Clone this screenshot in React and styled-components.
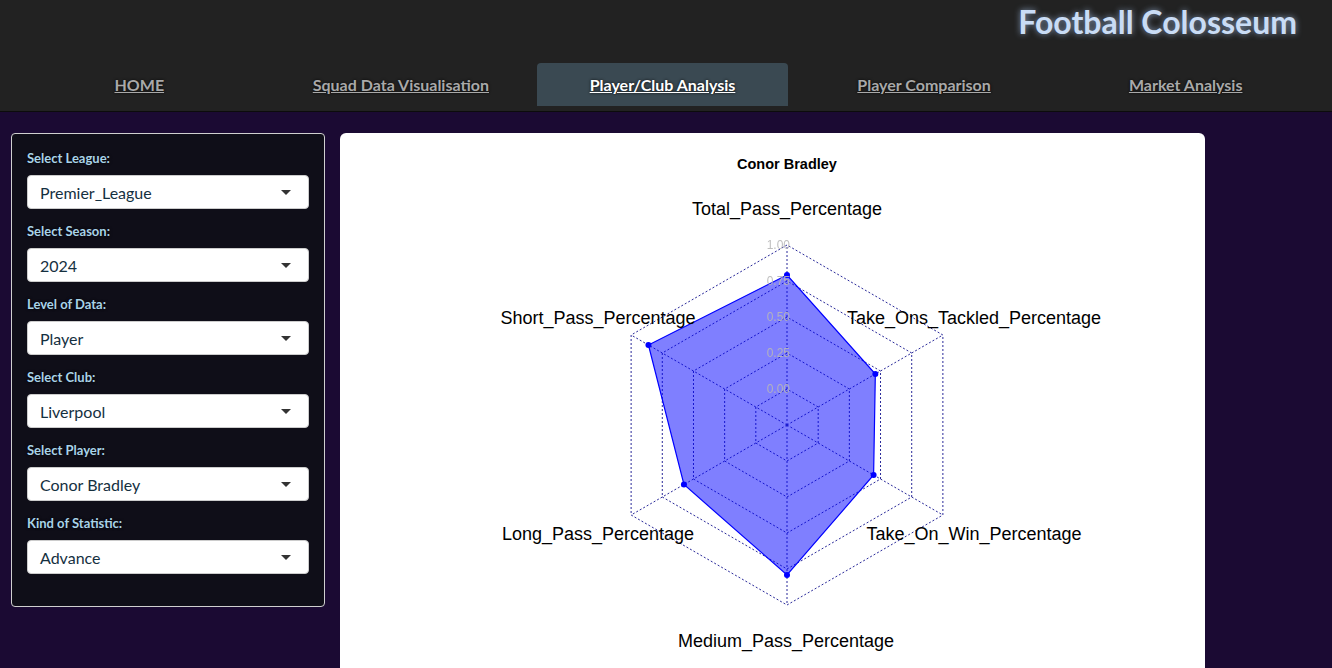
import React from "react";
import styled, { createGlobalStyle } from "styled-components";

// Sidebar inputs
const filters = [
  { label: "Select League:", value: "Premier_League" },
  { label: "Select Season:", value: "2024" },
  { label: "Level of Data:", value: "Player" },
  { label: "Select Club:", value: "Liverpool" },
  { label: "Select Player:", value: "Conor Bradley" },
  { label: "Kind of Statistic:", value: "Advance" },
];

const tabs = [
  "HOME",
  "Squad Data Visualisation",
  "Player/Club Analysis",
  "Player Comparison",
  "Market Analysis",
];

// Radar chart geometry (page coordinates, svg viewBox matches the panel)
const CX = 787;
const CY = 425;
const R0 = 36;
const STEP = 36;
const angles = [90, 150, 210, 270, 330, 30];
const radii = [150, 160, 119, 150, 100, 102];

const pt = (r, deg) => {
  const a = (deg * Math.PI) / 180;
  return [CX + r * Math.cos(a), CY - r * Math.sin(a)];
};

const ring = (r) => angles.map((d) => pt(r, d).join(",")).join(" ");

const axisLabels = [
  { text: "Total_Pass_Percentage", x: 787, y: 215 },
  { text: "Short_Pass_Percentage", x: 598, y: 324 },
  { text: "Long_Pass_Percentage", x: 598, y: 540 },
  { text: "Medium_Pass_Percentage", x: 786, y: 647 },
  { text: "Take_On_Win_Percentage", x: 974, y: 540 },
  { text: "Take_Ons_Tackled_Percentage", x: 974, y: 324 },
];

const ticks = ["0.00", "0.25", "0.50", "0.75", "1.00"];

const RadarChart = () => {
  const data = angles.map((d, i) => pt(radii[i], d));
  return (
    <svg width="865" height="535" viewBox="340 133 865 535">
      <text x="787" y="169" textAnchor="middle" fontSize="14.5" fontWeight="bold" fill="#000">
        Conor Bradley
      </text>
      {[0, 1, 2, 3, 4].map((i) => (
        <polygon
          key={i}
          points={ring(R0 + i * STEP)}
          fill="none"
          stroke="#2a2a9a"
          strokeWidth="1"
          strokeDasharray="2 2"
        />
      ))}
      {angles.map((d) => {
        const [x, y] = pt(180, d);
        return (
          <line
            key={d}
            x1={CX}
            y1={CY}
            x2={x}
            y2={y}
            stroke="#2a2a9a"
            strokeWidth="1"
            strokeDasharray="2 2"
          />
        );
      })}
      <polygon
        points={data.map((p) => p.join(",")).join(" ")}
        fill="rgba(0,0,255,0.5)"
        stroke="#0000ff"
        strokeWidth="1.2"
      />
      {data.map(([x, y], i) => (
        <circle key={i} cx={x} cy={y} r="3" fill="#0000ff" />
      ))}
      {ticks.map((t, i) => (
        <text
          key={t}
          x="790"
          y={CY - R0 - i * STEP + 4}
          textAnchor="end"
          fontSize="12"
          fill="#b8b8b8"
          opacity="0.9"
        >
          {t}
        </text>
      ))}
      {axisLabels.map((l) => (
        <text key={l.text} x={l.x} y={l.y} textAnchor="middle" fontSize="18" fill="#000">
          {l.text}
        </text>
      ))}
    </svg>
  );
};

const App = () => {
  return (
    <>
      <GlobalStyle />
      <Page>
        <Header>
          <TitleRow>
            <Title>Football Colosseum</Title>
          </TitleRow>
          <Nav>
            {tabs.map((t) => (
              <NavItem key={t} $active={t === "Player/Club Analysis"}>
                <NavLink $active={t === "Player/Club Analysis"}>{t}</NavLink>
              </NavItem>
            ))}
          </Nav>
        </Header>
        <Body>
          <Sidebar>
            {filters.map((f) => (
              <Field key={f.label}>
                <Label>{f.label}</Label>
                <Select>
                  <span>{f.value}</span>
                  <Caret />
                </Select>
              </Field>
            ))}
          </Sidebar>
          <ChartPanel>
            <RadarChart />
          </ChartPanel>
        </Body>
      </Page>
    </>
  );
};

export default App;

const GlobalStyle = createGlobalStyle`
  html, body {
    margin: 0;
    padding: 0;
    background: #1b0a33;
    font-family: Lato, "Liberation Sans", sans-serif;
    overflow: hidden;
  }
  svg text {
    font-family: "Liberation Sans", Arial, sans-serif;
  }
`;

const Page = styled.div`
  height: 100vh;
  overflow: hidden;
`;

const Header = styled.header`
  background: #222222;
  height: 111px;
  border-bottom: 1px solid #0c0c0c;
  display: flex;
  flex-direction: column;
`;

const TitleRow = styled.div`
  height: 63px;
  display: flex;
  justify-content: flex-end;
  padding-right: 35px;
`;

const Title = styled.h1`
  margin: 0;
  padding-top: 2px;
  font-size: 32px;
  font-weight: 700;
  color: #c9dcf5;
  text-shadow: 0 0 6px rgba(170, 200, 240, 0.7);
`;

const Nav = styled.nav`
  display: grid;
  grid-template-columns: repeat(5, 1fr);
  padding: 0 16px 0 8px;
  height: 43px;
`;

const NavItem = styled.div`
  margin: 0 5px 0 6px;
  display: flex;
  align-items: center;
  justify-content: center;
  border-radius: 4px 4px 0 0;
  background: ${(p) => (p.$active ? "#3a4952" : "transparent")};
`;

const NavLink = styled.a`
  font-size: 16px;
  font-weight: 700;
  text-decoration: underline;
  color: ${(p) => (p.$active ? "#ffffff" : "#a9a9a9")};
  text-shadow: 0 0 3px rgba(0, 0, 0, 0.9);
  cursor: pointer;
`;

const Body = styled.main`
  display: flex;
  align-items: flex-start;
  gap: 15px;
  padding: 21px 11px 0;
`;

const Sidebar = styled.aside`
  width: 282px;
  flex: none;
  background: #0f0e18;
  border: 1px solid #cfcfcf;
  border-radius: 4px;
  padding: 16px 15px 18px 15px;
`;

const Field = styled.div`
  margin-bottom: 14px;
`;

const Label = styled.div`
  font-size: 13px;
  line-height: 17px;
  font-weight: 700;
  color: #a9d3e8;
  text-shadow: 0 0 3px rgba(0, 0, 0, 0.9);
  margin-bottom: 8px;
`;

const Select = styled.div`
  height: 34px;
  box-sizing: border-box;
  background: #ffffff;
  border: 1px solid #cccccc;
  border-radius: 4px;
  display: flex;
  align-items: center;
  justify-content: space-between;
  padding: 0 17px 0 12px;
  font-size: 16px;
  color: #15303f;
`;

const Caret = styled.span`
  width: 0;
  height: 0;
  border-left: 5px solid transparent;
  border-right: 5px solid transparent;
  border-top: 5px solid #333333;
`;

const ChartPanel = styled.section`
  width: 865px;
  height: 535px;
  background: #ffffff;
  border-radius: 6px 6px 0 0;
  overflow: hidden;
  flex: none;

  svg {
    display: block;
  }
`;
